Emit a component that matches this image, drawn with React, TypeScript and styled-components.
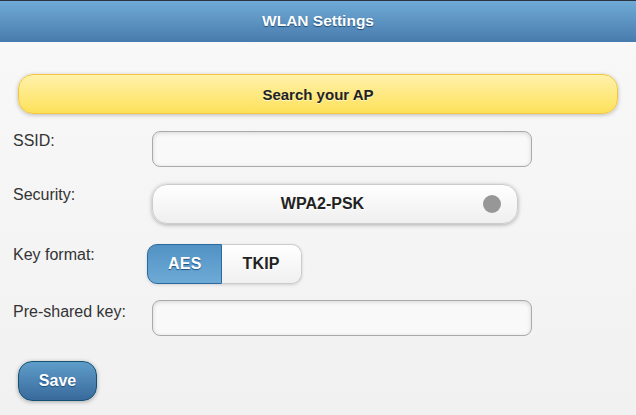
import styled, { createGlobalStyle } from 'styled-components';

const GlobalStyle = createGlobalStyle`
    html, body {
        margin: 0;
        padding: 0;
    }
    body {
        font-family: "Liberation Sans", Arial, sans-serif;
    }
`;

const Page = styled.div`
    min-height: 100vh;
    background: linear-gradient(#f9f9f9, #f1f1f1);
    border-top: 1px solid #2b3440;
    box-sizing: border-box;
`;

const Header = styled.div`
    height: 41px;
    display: flex;
    align-items: center;
    justify-content: center;
    background: linear-gradient(#6fabd6, #487bad);
    color: #fff;
    font-size: 15.5px;
    font-weight: bold;
    text-shadow: 0 1px 1px #1f4a73;
    padding-bottom: 2px;
    box-sizing: border-box;
`;

const Content = styled.div`
    padding: 32px 18px 0 0;
`;

const SearchButton = styled.button`
    display: block;
    width: 600px;
    height: 40px;
    margin-left: 18px;
    border: 1px solid #f4c63f;
    border-radius: 15px;
    background: linear-gradient(#fff1ab, #fde15a);
    box-shadow: 0 1px 4px rgba(0, 0, 0, 0.25);
    font-family: inherit;
    font-size: 15px;
    font-weight: bold;
    color: #222;
    text-shadow: 0 1px 0 #fff6c8;
    cursor: pointer;
`;

const Form = styled.div`
    padding-left: 13px;
`;

const Row = styled.div<{ top: number }>`
    display: flex;
    align-items: flex-start;
    margin-top: ${(p) => p.top}px;
`;

const Label = styled.label<{ offset: number }>`
    width: 139px;
    flex: none;
    padding-top: ${(p) => p.offset}px;
    font-size: 16px;
    line-height: 18px;
    color: #333;
`;

const TextInput = styled.input`
    width: 380px;
    height: 36px;
    box-sizing: border-box;
    border: 1px solid #aaa;
    border-radius: 8px;
    background: #f9f9f9;
    box-shadow: inset 0 1px 4px rgba(0, 0, 0, 0.15);
    outline: none;
    padding: 0 10px;
    font-family: inherit;
    font-size: 15px;
`;

const SelectButton = styled.div`
    width: 366px;
    height: 40px;
    box-sizing: border-box;
    display: flex;
    align-items: center;
    padding: 0 16px 0 15px;
    border: 1px solid #ccc;
    border-radius: 15px;
    background: linear-gradient(#ffffff, #efefef);
    box-shadow: 0 1px 4px rgba(0, 0, 0, 0.3);
    color: #222;
    font-size: 16px;
    font-weight: bold;
    text-shadow: 0 1px 0 #fff;
    cursor: pointer;
`;

const SelectText = styled.span`
    flex: 1;
    text-align: center;
    margin-right: 6px;
`;

const Dot = styled.span`
    width: 18px;
    height: 18px;
    border-radius: 50%;
    background: #979797;
    flex: none;
`;

const Segmented = styled.div`
    display: flex;
    margin-left: -5px;
    height: 40px;
    border-radius: 10px;
    box-shadow: 0 1px 3px rgba(0, 0, 0, 0.15);
`;

const Segment = styled.button<{ active?: boolean; first?: boolean }>`
    height: 40px;
    box-sizing: border-box;
    padding: 0 ${(p) => (p.first ? '19px 0 20px' : '21px')};
    font-family: inherit;
    font-size: 16px;
    font-weight: bold;
    letter-spacing: 0.2px;
    border: 1px solid ${(p) => (p.active ? '#2a6aa0' : '#ccc')};
    border-radius: ${(p) => (p.first ? '10px 0 0 10px' : '0 10px 10px 0')};
    ${(p) => (p.first ? '' : 'border-left: none;')}
    background: ${(p) =>
        p.active ? 'linear-gradient(#5192c4, #6eaad6)' : 'linear-gradient(#ffffff, #f0f0f0)'};
    color: ${(p) => (p.active ? '#fff' : '#222')};
    text-shadow: ${(p) => (p.active ? '0 1px 1px #1d5180' : '0 1px 0 #fff')};
    cursor: pointer;
`;

const SaveButton = styled.button`
    margin: 25px 0 0 18px;
    width: 79px;
    height: 40px;
    border: 1px solid #145072;
    border-radius: 14px;
    background: linear-gradient(#5f9dc9, #386a9c);
    box-shadow: 0 1px 4px rgba(0, 0, 0, 0.3);
    color: #fff;
    font-family: inherit;
    font-size: 16px;
    font-weight: bold;
    text-shadow: 0 1px 1px #194b7e;
    cursor: pointer;
`;

const App = () => {
    return (
        <Page>
            <GlobalStyle />
            <Header>WLAN Settings</Header>
            <Content>
                <SearchButton>Search your AP</SearchButton>
                <Form>
                    <Row top={17}>
                        <Label offset={1}>SSID:</Label>
                        <TextInput type="text" />
                    </Row>
                    <Row top={17}>
                        <Label offset={2}>Security:</Label>
                        <SelectButton>
                            <SelectText>WPA2-PSK</SelectText>
                            <Dot />
                        </SelectButton>
                    </Row>
                    <Row top={20}>
                        <Label offset={2}>Key format:</Label>
                        <Segmented>
                            <Segment first active>AES</Segment>
                            <Segment>TKIP</Segment>
                        </Segmented>
                    </Row>
                    <Row top={16}>
                        <Label offset={3}>Pre-shared key:</Label>
                        <TextInput type="text" />
                    </Row>
                </Form>
                <SaveButton>Save</SaveButton>
            </Content>
        </Page>
    );
};

export default App;
